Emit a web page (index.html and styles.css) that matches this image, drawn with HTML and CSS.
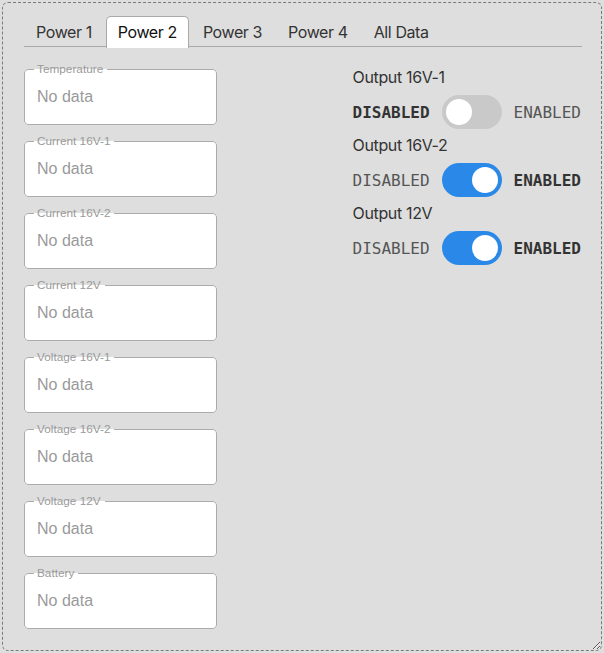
FILE: index.html
```html
<!DOCTYPE html>
<html>
<head>
<meta charset="utf-8">
<link rel="stylesheet" href="styles.css">
</head>
<body>
<div class="panel">
  <div class="tabs">
    <div class="tab">Power 1</div>
    <div class="tab active">Power 2</div>
    <div class="tab">Power 3</div>
    <div class="tab">Power 4</div>
    <div class="tab">All Data</div>
  </div>
  <div class="content">
    <div class="fields">
      <fieldset class="field"><legend>Temperature</legend><div class="value">No data</div></fieldset>
      <fieldset class="field"><legend>Current 16V-1</legend><div class="value">No data</div></fieldset>
      <fieldset class="field"><legend>Current 16V-2</legend><div class="value">No data</div></fieldset>
      <fieldset class="field"><legend>Current 12V</legend><div class="value">No data</div></fieldset>
      <fieldset class="field"><legend>Voltage 16V-1</legend><div class="value">No data</div></fieldset>
      <fieldset class="field"><legend>Voltage 16V-2</legend><div class="value">No data</div></fieldset>
      <fieldset class="field"><legend>Voltage 12V</legend><div class="value">No data</div></fieldset>
      <fieldset class="field"><legend>Battery</legend><div class="value">No data</div></fieldset>
    </div>
    <div class="outputs">
      <div class="output">
        <div class="out-title">Output 16V-1</div>
        <div class="switch-row">
          <span class="state on">DISABLED</span>
          <span class="toggle"><span class="knob"></span></span>
          <span class="state">ENABLED</span>
        </div>
      </div>
      <div class="output">
        <div class="out-title">Output 16V-2</div>
        <div class="switch-row">
          <span class="state">DISABLED</span>
          <span class="toggle checked"><span class="knob"></span></span>
          <span class="state on">ENABLED</span>
        </div>
      </div>
      <div class="output">
        <div class="out-title">Output 12V</div>
        <div class="switch-row">
          <span class="state">DISABLED</span>
          <span class="toggle checked"><span class="knob"></span></span>
          <span class="state on">ENABLED</span>
        </div>
      </div>
    </div>
  </div>
</div>
</body>
</html>
```
FILE: styles.css
```css
html, body {
  margin: 0;
  padding: 0;
  background: #dedede;
}
body {
  padding: 2px;
  font-family: Inter, "Liberation Sans", sans-serif;
}
.panel {
  box-sizing: border-box;
  width: 600px;
  height: 649px;
  border: 1px dashed #7a7a7a;
  border-radius: 6px;
  padding: 13px 19px 0 21px;
  resize: both;
  overflow: hidden;
}
.tabs {
  display: flex;
  gap: 2px;
  border-bottom: 1px solid #a9a9a9;
  height: 30px;
}
.tab {
  padding: 0 11px;
  height: 30px;
  line-height: 31px;
  font-size: 16px;
  letter-spacing: -0.4px;
  color: #333;
  border: 1px solid transparent;
  border-bottom: none;
  border-radius: 5px 5px 0 0;
}
.tab.active {
  background: #fff;
  border-color: #a9a9a9;
  height: 31px;
  margin-bottom: -1px;
  color: #111;
}
.content {
  display: flex;
  margin-top: 16px;
}
.fields {
  display: flex;
  flex-direction: column;
  gap: 10px;
  width: 193px;
}
.field {
  margin: 0;
  padding: 0 11px 0 9px;
  border: 1px solid #ababab;
  border-radius: 4px;
  background: #fff;
  min-width: 0;
}
.field legend {
  padding: 0 4px 0 3px;
  font-family: "Liberation Sans", Arial, sans-serif;
  font-size: 11.8px;
  line-height: 12px;
  color: #9a9a9a;
}
.value {
  padding: 12px 0 17px 3px;
  font-family: "Liberation Sans", Arial, sans-serif;
  font-size: 16px;
  line-height: 20px;
  color: #9a9a9a;
}
.outputs {
  margin-left: auto;
  padding-top: 4px;
  padding-right: 1px;
  display: flex;
  flex-direction: column;
  gap: 6px;
}
.output {
  display: flex;
  flex-direction: column;
  gap: 8px;
}
.out-title {
  font-size: 16px;
  line-height: 20px;
  letter-spacing: -0.35px;
  color: #333;
}
.switch-row {
  display: flex;
  align-items: center;
  gap: 12px;
}
.state {
  font-family: "DejaVu Sans Mono", "Liberation Mono", monospace;
  font-size: 16px;
  color: #555;
}
.state.on {
  font-weight: bold;
  color: #333;
}
.toggle {
  box-sizing: border-box;
  width: 60px;
  height: 34px;
  border-radius: 17px;
  background: #c9c9c9;
  padding: 4px;
  display: flex;
}
.toggle.checked {
  background: #2a89e8;
  justify-content: flex-end;
}
.knob {
  width: 26px;
  height: 26px;
  border-radius: 50%;
  background: #fff;
}
```
